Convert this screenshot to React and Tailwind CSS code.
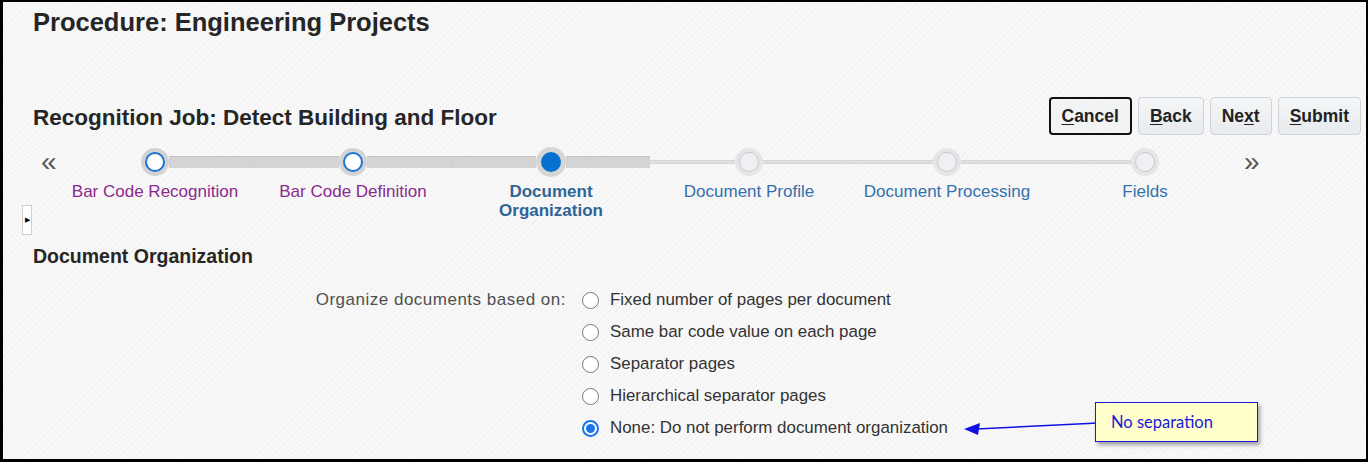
import React from 'react';

const steps = [
  { label: ['Bar Code Recognition'], state: 'visited' },
  { label: ['Bar Code Definition'], state: 'visited' },
  { label: ['Document', 'Organization'], state: 'current' },
  { label: ['Document Profile'], state: 'todo' },
  { label: ['Document Processing'], state: 'todo' },
  { label: ['Fields'], state: 'todo' },
];

const options = [
  'Fixed number of pages per document',
  'Same bar code value on each page',
  'Separator pages',
  'Hierarchical separator pages',
  'None: Do not perform document organization',
];

function Segment({ thick, hidden }) {
  if (hidden) return <div className="flex-1" />;
  return thick ? (
    <div className="flex-1 h-[12px] bg-[#d4d4d4] shadow-[inset_0_1px_1px_rgba(0,0,0,0.08)]" />
  ) : (
    <div className="flex-1 h-[4px] bg-[#e0e0e0] border-y border-[#d6d6d6]" />
  );
}

function Dot({ state }) {
  if (state === 'visited') {
    return (
      <div className="w-[28px] h-[28px] shrink-0 rounded-full bg-[#d3d3d3] flex items-center justify-center">
        <div className="w-[20px] h-[20px] rounded-full bg-white border-2 border-[#1c74d4]" />
      </div>
    );
  }
  if (state === 'current') {
    return (
      <div className="w-[30px] h-[30px] shrink-0 rounded-full bg-[#d6d6d6] flex items-center justify-center">
        <div className="w-[20px] h-[20px] rounded-full bg-[#0870d0]" />
      </div>
    );
  }
  return (
    <div className="w-[28px] h-[28px] shrink-0 rounded-full bg-[#e6e6e6] flex items-center justify-center">
      <div className="w-[20px] h-[20px] rounded-full bg-[#eef0f3] border border-[#c5cace]" />
    </div>
  );
}

function Btn({ first, rest, focused, pre }) {
  return (
    <button
      className={
        'h-[38px] px-[11px] rounded-[4px] text-[17.5px] font-bold text-[#222] ' +
        (focused
          ? 'border-2 border-[#111] bg-[#f1f3f5]'
          : 'border border-[#cdd3d8] bg-[linear-gradient(#f4f6f7,#e8ebee)]')
      }
    >
      {pre}
      <span className="underline underline-offset-2">{first}</span>
      {rest}
    </button>
  );
}

export default function App() {
  return (
    <div className="w-[1370px] h-[462px] bg-white font-['Liberation_Sans',Arial,sans-serif]">
      <div className="relative w-[1368px] h-[462px] border-t-2 border-b-[3px] border-l-[3px] border-r-2 border-black bg-[repeating-linear-gradient(135deg,#f8f8f8_0px,#f8f8f8_3px,#f2f2f2_3px,#f2f2f2_4px)] flex flex-col">
        <div className="pl-[30px] pt-[5px] text-[25.5px] leading-[30px] font-bold text-[#262626]">
          Procedure: Engineering Projects
        </div>

        <div className="mt-[60px] pl-[30px] pr-[5px] flex items-center justify-between">
          <div className="text-[22.5px] font-bold text-[#262626] leading-[28px] pt-[3px]">
            Recognition Job: Detect Building and Floor
          </div>
          <div className="flex gap-[6px]">
            <Btn focused first="C" rest="ancel" />
            <Btn first="B" rest="ack" />
            <Btn pre="Ne" first="x" rest="t" />
            <Btn first="S" rest="ubmit" />
          </div>
        </div>

        <div className="mt-[12px] flex items-start pl-[38px]">
          <div className="w-[15px] h-[30px] flex items-center text-[28px] text-[#555] leading-none">«</div>
          <div className="grid grid-cols-6 w-[1188px]">
            {steps.map((s, i) => (
              <div key={i} className="flex flex-col items-center">
                <div className="w-full h-[30px] flex items-center">
                  <Segment hidden={i === 0} thick={i <= 2} />
                  <Dot state={s.state} />
                  <Segment hidden={i === steps.length - 1} thick={i <= 2} />
                </div>
                <div
                  className={
                    'mt-[5px] text-center text-[17px] leading-[19px] ' +
                    (s.state === 'visited'
                      ? 'text-[#8a2a8c]'
                      : s.state === 'current'
                      ? 'font-bold text-[#2e6596]'
                      : 'text-[#3470ab]')
                  }
                >
                  {s.label.map((l) => (
                    <div key={l}>{l}</div>
                  ))}
                </div>
              </div>
            ))}
          </div>
          <div className="w-[20px] h-[30px] flex items-center text-[28px] text-[#555] leading-none">»</div>
        </div>

        <div className="ml-[19px] -mt-[15px] w-[10px] h-[30px] border border-[#cfcfcf] bg-white flex items-center justify-center text-[7px] text-black">
          ▶
        </div>

        <div className="mt-[9px] pl-[30px] text-[19.5px] font-bold text-[#262626] leading-[24px]">
          Document Organization
        </div>

        <div className="mt-[22px] flex">
          <div className="w-[563px] text-right text-[17px] tracking-[0.5px] text-[#505050] leading-[20px]">
            Organize documents based on:
          </div>
          <div className="ml-[16px] flex flex-col gap-[12px]">
            {options.map((o, i) => (
              <div key={o} className="flex items-center h-[20px]">
                {i === options.length - 1 ? (
                  <div className="w-[17px] h-[17px] rounded-full border-2 border-[#1a73e8] bg-white flex items-center justify-center">
                    <div className="w-[9px] h-[9px] rounded-full bg-[#1a73e8]" />
                  </div>
                ) : (
                  <div className="w-[17px] h-[17px] rounded-full border-[1.5px] border-[#767676] bg-white" />
                )}
                <span className="ml-[11px] text-[16.9px] text-[#333]">{o}</span>
              </div>
            ))}
          </div>
        </div>

        <svg className="absolute left-[955px] top-[410px]" width="145" height="30" viewBox="0 0 145 30">
          <line x1="140" y1="11" x2="18" y2="17" stroke="#1010e0" strokeWidth="1.5" />
          <polygon points="6,17 22,11 20,23" fill="#1010e0" />
        </svg>
        <div className="absolute left-[1092px] top-[400px] w-[163px] h-[40px] border border-[#1a1ae0] bg-[#ffffcc] shadow-[2px_3px_4px_rgba(0,0,0,0.35)] flex items-center pl-[15px] font-['Lato',sans-serif] text-[16.5px] text-[#1a1ad8]">
          No separation
        </div>
      </div>
    </div>
  );
}
